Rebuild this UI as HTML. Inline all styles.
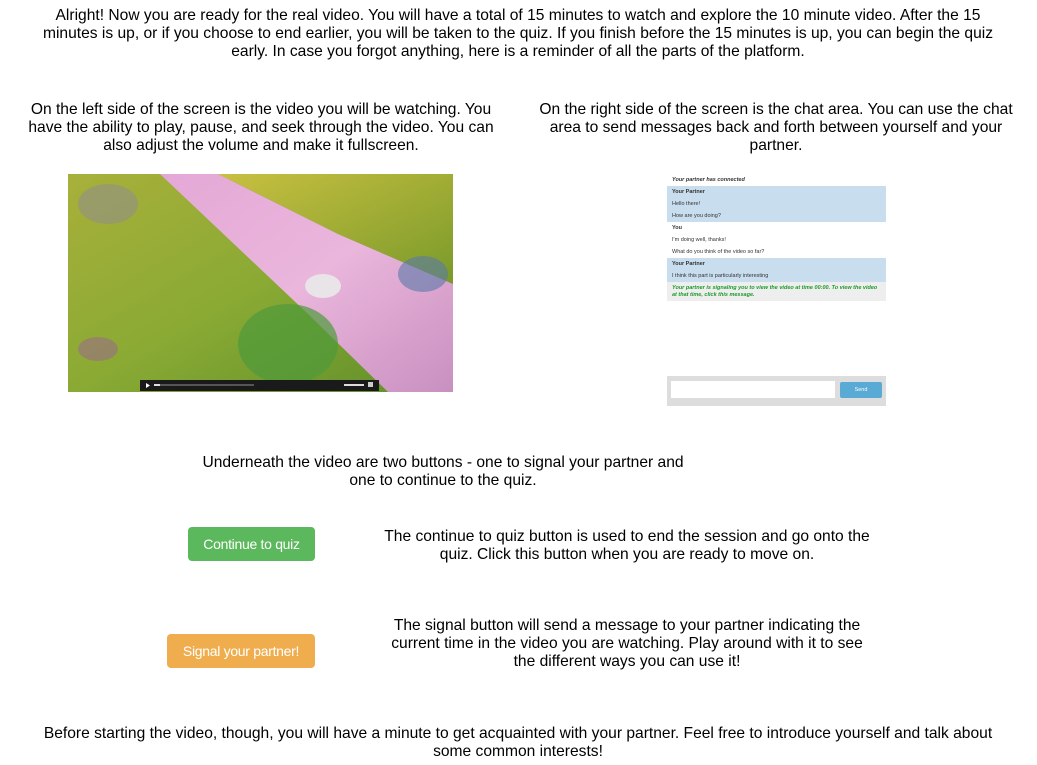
<!DOCTYPE html>
<html><head><style>
body{margin:0;width:1037px;height:765px;background:#fff;font-family:"Liberation Sans",Arial,sans-serif;font-size:15.6px;line-height:18px;color:#000;position:relative;overflow:hidden}
.p{position:absolute;text-align:center;margin:0}
.btn{position:absolute;color:#fff;font-size:14px;border-radius:4px;text-align:center;line-height:34px;height:34px;letter-spacing:-0.3px}
.chat{position:absolute;left:667px;top:176px;width:219px;height:230px;font-size:5.5px;line-height:12px;color:#333}
.chat div{padding-left:5px}
.b{background:#c8ddee}
</style></head><body>
<p class="p" style="left:28px;top:7px;width:980px">Alright! Now you are ready for the real video. You will have a total of 15 minutes to watch and explore the 10 minute video. After the 15 minutes is up, or if you choose to end earlier, you will be taken to the quiz. If you finish before the 15 minutes is up, you can begin the quiz early. In case you forgot anything, here is a reminder of all the parts of the platform.</p>
<p class="p" style="left:16px;top:101px;width:490px">On the left side of the screen is the video you will be watching. You have the ability to play, pause, and seek through the video. You can also adjust the volume and make it fullscreen.</p>
<p class="p" style="left:526px;top:101px;width:500px">On the right side of the screen is the chat area. You can use the chat area to send messages back and forth between yourself and your partner.</p>
<svg style="position:absolute;left:68px;top:174px" width="385" height="218" viewBox="0 0 385 218">
<defs>
<linearGradient id="g1" x1="0" y1="0" x2="1" y2="1"><stop offset="0" stop-color="#a8b03a"/><stop offset="0.5" stop-color="#8aaa34"/><stop offset="1" stop-color="#5e8e2a"/></linearGradient>
<linearGradient id="g2" x1="0" y1="0" x2="1" y2="1"><stop offset="0" stop-color="#c8c040"/><stop offset="1" stop-color="#7a9a2a"/></linearGradient>
<linearGradient id="pk" x1="0" y1="0" x2="1" y2="1"><stop offset="0" stop-color="#e4a8d6"/><stop offset="0.5" stop-color="#eab6dc"/><stop offset="1" stop-color="#c890c0"/></linearGradient>
</defs>
<rect width="385" height="218" fill="url(#g1)"/>
<polygon points="150,0 385,0 385,110 270,60" fill="url(#g2)"/>
<polygon points="150,0 270,60 385,110 385,125 265,70 160,5" fill="#3e6a2a" opacity="0.6"/>
<polygon points="92,0 150,0 270,60 385,110 385,218 320,218 240,140" fill="url(#pk)"/>
<ellipse cx="220" cy="170" rx="50" ry="40" fill="#4e9a3a" opacity="0.7"/>
<ellipse cx="255" cy="112" rx="18" ry="12" fill="#e8e4e8"/>
<ellipse cx="355" cy="100" rx="25" ry="18" fill="#5a7aa8" opacity="0.6"/>
<ellipse cx="40" cy="30" rx="30" ry="20" fill="#8a80b0" opacity="0.4"/>
<ellipse cx="30" cy="175" rx="20" ry="12" fill="#a050b0" opacity="0.4"/>
<rect x="72" y="206" width="239" height="11" fill="#1a1a1a"/>
<polygon points="78,209 78,214 82,211.5" fill="#fff"/>
<rect x="86" y="210" width="100" height="2" fill="#555"/>
<rect x="86" y="210" width="6" height="2" fill="#ddd"/>
<rect x="276" y="210" width="20" height="2" fill="#ddd"/>
<rect x="300" y="208" width="5" height="5" fill="#ccc"/>
</svg>
<div class="chat">
<div style="font-style:italic;font-weight:bold;height:10px;line-height:8px">Your partner has connected</div>
<div class="b" style="font-weight:bold">Your Partner</div>
<div class="b">Hello there!</div>
<div class="b">How are you doing?</div>
<div style="font-weight:bold">You</div>
<div>I'm doing well, thanks!</div>
<div>What do you think of the video so far?</div>
<div class="b" style="font-weight:bold">Your Partner</div>
<div class="b">I think this part is particularly interesting</div>
<div style="background:#eee;color:#1a9a2a;font-weight:bold;font-style:italic;line-height:6.5px;padding-top:3px;padding-bottom:3px;padding-right:4px">Your partner is signaling you to view the video at time 00:00. To view the video at that time, click this message.</div>
<div style="position:absolute;left:0;top:200px;width:219px;height:30px;background:#ddd;padding:0"></div>
<div style="position:absolute;left:4px;top:205px;width:164px;height:17px;background:#fff;padding:0"></div>
<div style="position:absolute;left:173px;top:206px;width:42px;height:16px;background:#5aaad6;color:#fff;text-align:center;line-height:16px;padding:0;border-radius:2px">Send</div>
</div>
<p class="p" style="left:193px;top:454px;width:500px">Underneath the video are two buttons - one to signal your partner and one to continue to the quiz.</p>
<div class="btn" style="left:188px;top:527px;width:127px;background:#5cb85c">Continue to quiz</div>
<p class="p" style="left:367px;top:528px;width:520px">The continue to quiz button is used to end the session and go onto the quiz. Click this button when you are ready to move on.</p>
<div class="btn" style="left:167px;top:634px;width:148px;background:#f0ad4e">Signal your partner!</div>
<p class="p" style="left:382px;top:617px;width:490px">The signal button will send a message to your partner indicating the current time in the video you are watching. Play around with it to see the different ways you can use it!</p>
<p class="p" style="left:23px;top:725px;width:990px">Before starting the video, though, you will have a minute to get acquainted with your partner. Feel free to introduce yourself and talk about some common interests!</p>
</body></html>
